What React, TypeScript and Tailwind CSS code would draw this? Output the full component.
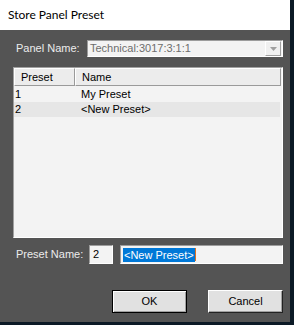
import React from 'react';

const ui = { fontFamily: '"Liberation Sans", Arial, sans-serif' };

function App() {
  return (
    <div className="w-[294px] h-[325px] flex flex-col bg-[#0c1a26]" style={ui}>
      <div className="flex flex-1">
        <div className="w-[290px] flex flex-col bg-[#545454]">
          <div
            className="h-[30px] bg-white flex items-center pl-[8px] text-[12px] text-black"
            style={{ fontFamily: 'Lato, "Noto Sans", sans-serif' }}
          >
            Store Panel Preset
          </div>

          {/* panel name */}
          <div className="flex items-center mt-[10px] h-[17px]">
            <span className="ml-[16px] w-[71px] text-[11px] text-[#ececec]">Panel Name:</span>
            <div className="w-[196px] h-[17px] flex items-center bg-[#f3f3f3] border border-[#9c9c9c] border-r-white border-b-white">
              <span className="pl-[2px] flex-1 text-[11px] text-[#6d6d6d] leading-none">Technical:3017:3:1:1</span>
              <div className="w-[16px] h-[15px] mr-[1px] flex items-center justify-center bg-[#f0f0f0] border border-white border-r-[#a0a0a0] border-b-[#a0a0a0]">
                <svg width="7" height="4" viewBox="0 0 7 4">
                  <path d="M0 0h7L3.5 4z" fill="#a0a0a0" />
                </svg>
              </div>
            </div>
          </div>

          {/* list */}
          <div className="ml-[13px] mt-[10px] w-[270px] h-[171px] bg-[#f3f3f3] border border-[#a0a0a0] border-r-white border-b-white">
            <div className="flex h-[18px] w-[267px] text-[11px] text-black">
              <div className="w-[61px] flex items-center pl-[6px] bg-[#ececec] border border-white border-r-[#9a9a9a] border-b-[#9a9a9a]">
                Preset
              </div>
              <div className="flex-1 flex items-center pl-[6px] bg-[#ececec] border border-white border-r-[#9a9a9a] border-b-[#9a9a9a]">
                Name
              </div>
            </div>
            <div className="text-[11px] text-black">
              <div className="flex h-[16px] items-center w-[266px]">
                <span className="w-[61px] pl-[1px]">1</span>
                <span className="pl-[6px]">My Preset</span>
              </div>
              <div className="flex h-[15px] items-center w-[266px] bg-[#e6e6e6]">
                <span className="w-[61px] pl-[1px]">2</span>
                <span className="pl-[6px]">&lt;New Preset&gt;</span>
              </div>
            </div>
          </div>

          {/* preset name */}
          <div className="flex items-center mt-[7px] h-[19px]">
            <span className="ml-[16px] w-[73px] text-[11px] text-[#ececec]">Preset Name:</span>
            <div className="w-[24px] h-[19px] flex items-center bg-[#f3f3f3] border border-[#9c9c9c] border-r-white border-b-white">
              <span className="pl-[3px] text-[11px] text-black">2</span>
            </div>
            <div className="ml-[7px] w-[163px] h-[19px] flex items-center bg-[#f3f3f3] border border-[#9c9c9c] border-r-white border-b-white">
              <span className="ml-[2px] px-[1px] text-[11px] leading-[14px] bg-[#0078d7] text-white">&lt;New Preset&gt;</span>
              <span className="w-[1px] h-[13px] bg-[#e07020]" />
            </div>
          </div>

          {/* buttons */}
          <div className="flex mt-[26px] pl-[112px] gap-[21px]">
            <button className="w-[75px] h-[23px] bg-[#e1e1e1] border border-black text-[11px] text-black shadow-[inset_1px_1px_0_#fff,inset_-1px_-1px_0_#a0a0a0]">
              OK
            </button>
            <button className="w-[75px] h-[23px] bg-[#e1e1e1] border border-white border-r-[#222] border-b-[#222] text-[11px] text-black shadow-[inset_-1px_-1px_0_#a0a0a0]">
              Cancel
            </button>
          </div>
        </div>
      </div>
      <div className="h-[3px]" />
    </div>
  );
}

export default App;
